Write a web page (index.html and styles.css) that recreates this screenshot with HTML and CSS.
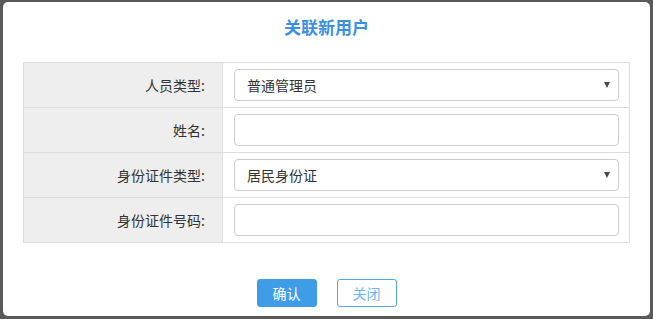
FILE: index.html
```html
<!DOCTYPE html>
<html lang="zh-CN">
<head>
<meta charset="utf-8">
<title>关联新用户</title>
<link rel="stylesheet" href="styles.css">
</head>
<body>
<div class="modal">
  <div class="modal-header">关联新用户</div>
  <table class="form-table">
    <tr>
      <th>人员类型:</th>
      <td>
        <div class="select-wrap">
          <select class="field"><option>普通管理员</option></select>
          <span class="arrow"></span>
        </div>
      </td>
    </tr>
    <tr>
      <th>姓名:</th>
      <td><input class="field" type="text"></td>
    </tr>
    <tr>
      <th>身份证件类型:</th>
      <td>
        <div class="select-wrap">
          <select class="field"><option>居民身份证</option></select>
          <span class="arrow"></span>
        </div>
      </td>
    </tr>
    <tr>
      <th>身份证件号码:</th>
      <td><input class="field" type="text"></td>
    </tr>
  </table>
  <div class="actions">
    <button class="btn btn-primary">确认</button>
    <button class="btn btn-outline">关闭</button>
  </div>
</div>
</body>
</html>
```

FILE: styles.css
```css
html, body {
  margin: 0;
  padding: 0;
}
body {
  background: #5a5a5a;
  width: 653px;
  height: 319px;
  overflow: hidden;
  padding: 2px 0 0 3px;
  box-sizing: border-box;
  font-family: "Noto Sans CJK SC", "Noto Sans", sans-serif;
  color: #333;
}
.modal {
  width: 647px;
  height: 314px;
  background: #fff;
  border-radius: 5px;
  padding: 0 20px;
  box-sizing: border-box;
}
.modal-header {
  height: 60px;
  box-sizing: border-box;
  padding-top: 15px;
  line-height: 20px;
  text-align: center;
  font-size: 17px;
  font-weight: bold;
  color: #3d8fe0;
}
.form-table {
  width: 607px;
  border-collapse: collapse;
  border: 1px solid #ddd;
}
.form-table tr {
  height: 45px;
}
.form-table th {
  width: 199px;
  background: #eee;
  border: 1px solid #ddd;
  text-align: right;
  font-weight: normal;
  font-size: 14px;
  color: #333;
  padding: 0 17px 0 0;
  box-sizing: border-box;
}
.form-table td {
  border: 1px solid #ddd;
  padding: 0 9px 0 11px;
}
.select-wrap {
  position: relative;
}
.field {
  display: block;
  width: 385px;
  height: 32px;
  box-sizing: border-box;
  border: 1px solid #ccc;
  border-radius: 4px;
  padding: 0 12px;
  font-family: inherit;
  font-size: 14px;
  color: #333;
  background: #fff;
  appearance: none;
  -webkit-appearance: none;
  outline: none;
}
.arrow {
  position: absolute;
  right: 10px;
  top: 13px;
  width: 0;
  height: 0;
  border-left: 3px solid transparent;
  border-right: 3px solid transparent;
  border-top: 6px solid #4a4a4a;
  pointer-events: none;
}
.actions {
  display: flex;
  justify-content: center;
  gap: 20px;
  margin-top: 36px;
}
.btn {
  width: 60px;
  height: 28px;
  border-radius: 3px;
  font-family: inherit;
  font-size: 14px;
  padding: 0;
  cursor: pointer;
}
.btn-primary {
  background: #3f9ce6;
  border: 1px solid #3f9ce6;
  color: #fff;
}
.btn-outline {
  background: #fff;
  border: 1px solid #4fa6ea;
  color: #6fb4ee;
}
```
